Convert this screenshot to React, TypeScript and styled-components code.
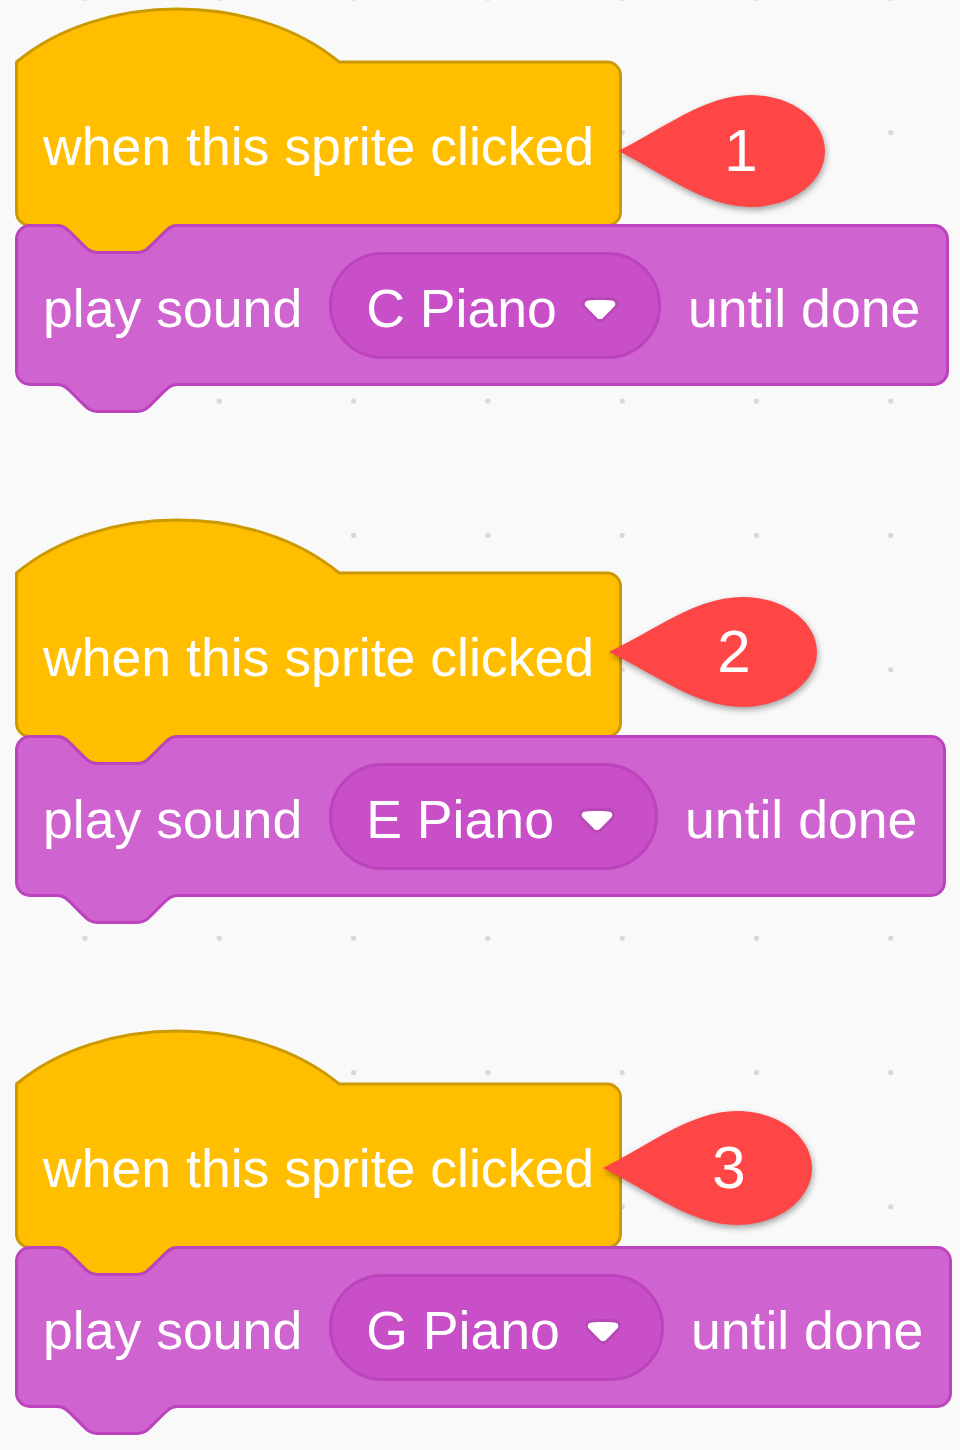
import React from "react";
import styled, { createGlobalStyle } from "styled-components";

/* ---------- block geometry (Scratch units scaled up) ---------- */
const S = 3.36;
const R = 4 * S;
const SW = 3;
const I = SW / 2;
const BODY_H = 162;

const scale = (p: string) =>
  p.replace(/-?\d+(\.\d+)?/g, (m) => (parseFloat(m) * S).toFixed(2));

const NOTCH_TOP = scale(
  "c 2,0 3,1 4,2 l 4,4 c 1,1 2,2 4,2 h 12 c 2,0 3,-1 4,-2 l 4,-4 c 1,-1 2,-2 4,-2"
);
const NOTCH_BOTTOM = scale(
  "c -2,0 -3,1 -4,2 l -4,4 c -1,1 -2,2 -4,2 h -12 c -2,0 -3,-1 -4,-2 l -4,-4 c -1,-1 -2,-2 -4,-2"
);

const hatPath = (w: number, h: number) => {
  const b = h + I;
  return `M ${I},0 c ${25 * S},${-21 * S} ${71 * S},${-21 * S} ${96 * S},0 H ${
    w - I - R
  } a ${R},${R} 0 0 1 ${R},${R} V ${b - R} a ${R},${R} 0 0 1 ${-R},${R} H ${
    I + 48 * S
  } ${NOTCH_BOTTOM} H ${I + R} a ${R},${R} 0 0 1 ${-R},${-R} Z`;
};

const commandPath = (w: number, h: number) =>
  `M ${I},${I + R} a ${R},${R} 0 0 1 ${R},${-R} H ${I + 12 * S} ${NOTCH_TOP} H ${
    w - I - R
  } a ${R},${R} 0 0 1 ${R},${R} V ${h - I - R} a ${R},${R} 0 0 1 ${-R},${R} H ${
    I + 48 * S
  } ${NOTCH_BOTTOM} H ${I + R} a ${R},${R} 0 0 1 ${-R},${-R} Z`;

const dropPath = (w: number, h: number) =>
  `M 0,${h / 2} C ${0.22 * w},${0.3 * h} ${0.42 * w},0 ${0.64 * w},0 C ${0.845 * w},0 ${w},${
    0.23 * h
  } ${w},${h / 2} C ${w},${0.77 * h} ${0.845 * w},${h} ${0.64 * w},${h} C ${0.42 * w},${h} ${
    0.22 * w
  },${0.7 * h} 0,${h / 2} Z`;

/* ---------- styles ---------- */
const GlobalStyle = createGlobalStyle`
  html, body { margin: 0; padding: 0; }
  body {
    background: #f9f9f9;
    font-family: "Liberation Sans", Arial, sans-serif;
  }
`;

const Workspace = styled.main`
  width: 960px;
  height: 1450px;
  box-sizing: border-box;
  padding: 62px 0 0 15px;
  display: flex;
  flex-direction: column;
  align-items: flex-start;
  gap: 187px;
  overflow: hidden;
  background-color: #f9f9f9;
  background-image: radial-gradient(circle, #d8d8d8 2.3px, rgba(216, 216, 216, 0) 3px);
  background-size: 134.3px 134.3px;
  background-position: 17.85px 65.4px;
`;

const Stack = styled.section`
  display: flex;
  flex-direction: column;
  align-items: flex-start;
`;

const Block = styled.div<{ $w: number }>`
  position: relative;
  width: ${(p) => p.$w}px;
  height: ${BODY_H}px;
  box-sizing: border-box;
  display: flex;
  align-items: center;
`;

const HatBlock = styled(Block)`
  padding: 0 28px;
`;

const CommandBlock = styled(Block)`
  padding: 0 29px 0 28px;
  gap: 27px;
`;

const Shape = styled.svg`
  position: absolute;
  left: 0;
  top: 0;
  overflow: visible;
  pointer-events: none;
`;

const Label = styled.span`
  position: relative;
  font-size: 53.6px;
  line-height: 1;
  padding-top: 8px;
  color: #ffffff;
  white-space: nowrap;
`;

const Dropdown = styled.div`
  position: relative;
  display: flex;
  align-items: center;
  gap: 25px;
  height: 107px;
  box-sizing: border-box;
  padding: 0 40px 0 34px;
  border: 3px solid #bd42bd;
  border-radius: 54px;
  background: #c94fc9;
`;

const Arrow = styled.svg`
  display: block;
  margin-top: 9px;
  flex: none;
`;

const Callout = styled.div<{ $x: number; $y: number; $w: number; $h: number }>`
  position: absolute;
  left: ${(p) => p.$x}px;
  top: ${(p) => p.$y}px;
  width: ${(p) => p.$w}px;
  height: ${(p) => p.$h}px;
  display: flex;
  align-items: center;
  filter: drop-shadow(1px 3px 3px rgba(0, 0, 0, 0.35));
  z-index: 2;
`;

const CalloutNumber = styled.span<{ $cx: number }>`
  position: relative;
  width: 40px;
  margin-left: ${(p) => p.$cx - 20}px;
  text-align: center;
  font-size: 60px;
  line-height: 1;
  color: #ffffff;
`;

/* ---------- data ---------- */
type StackData = {
  sound: string;
  width: number;
  callout: { n: number; x: number; y: number; w: number; h: number; cx: number };
};

const stacks: StackData[] = [
  { sound: "C Piano", width: 934, callout: { n: 1, x: 603, y: 33, w: 207, h: 112, cx: 123 } },
  { sound: "E Piano", width: 931, callout: { n: 2, x: 594, y: 24, w: 208, h: 110, cx: 125 } },
  { sound: "G Piano", width: 937, callout: { n: 3, x: 588, y: 27, w: 209, h: 114, cx: 126 } },
];

const HAT_W = 607;

/* ---------- components ---------- */
const DropArrow = () => (
  <Arrow width="36" height="25" viewBox="0 0 12.71 8.79">
    <path
      d="M12.71,2.44A2.41,2.41,0,0,1,12,4.16L8.08,8.08a2.45,2.45,0,0,1-3.45,0L0.72,4.16A2.42,2.42,0,0,1,0,2.44,2.48,2.48,0,0,1,.71.71C1.19,0.24,1.92,0,3.12,0h6.47c1.2,0,1.930.24,2.41,0.72A2.44,2.44,0,0,1,12.71,2.44Z"
      fill="#231f20"
      opacity="0.1"
    />
    <path
      d="M6.36,7.79a1.43,1.43,0,0,1-1-.42L1.42,3.45a1.44,1.44,0,0,1,0-2c0.56-.56,9.31-.56,9.87,0a1.44,1.44,0,0,1,0,2L7.37,7.37A1.43,1.43,0,0,1,6.36,7.79Z"
      fill="#ffffff"
    />
  </Arrow>
);

const ScriptStack = ({ data }: { data: StackData }) => {
  const c = data.callout;
  return (
    <Stack>
      <HatBlock $w={HAT_W}>
        <Shape width={HAT_W} height={BODY_H}>
          <path
            d={hatPath(HAT_W, BODY_H)}
            fill="#ffbf00"
            stroke="#cc9900"
            strokeWidth={SW}
            strokeLinejoin="round"
          />
        </Shape>
        <Label>when this sprite clicked</Label>
        <Callout $x={c.x} $y={c.y} $w={c.w} $h={c.h}>
          <Shape width={c.w} height={c.h}>
            <path d={dropPath(c.w, c.h)} fill="#ff4646" />
          </Shape>
          <CalloutNumber $cx={c.cx}>{c.n}</CalloutNumber>
        </Callout>
      </HatBlock>
      <CommandBlock $w={data.width}>
        <Shape width={data.width} height={BODY_H}>
          <path
            d={commandPath(data.width, BODY_H)}
            fill="#cf63cf"
            stroke="#bd42bd"
            strokeWidth={SW}
            strokeLinejoin="round"
          />
        </Shape>
        <Label>play sound</Label>
        <Dropdown>
          <Label>{data.sound}</Label>
          <DropArrow />
        </Dropdown>
        <Label>until done</Label>
      </CommandBlock>
    </Stack>
  );
};

export default function App() {
  return (
    <>
      <GlobalStyle />
      <Workspace>
        {stacks.map((s) => (
          <ScriptStack key={s.sound} data={s} />
        ))}
      </Workspace>
    </>
  );
}
